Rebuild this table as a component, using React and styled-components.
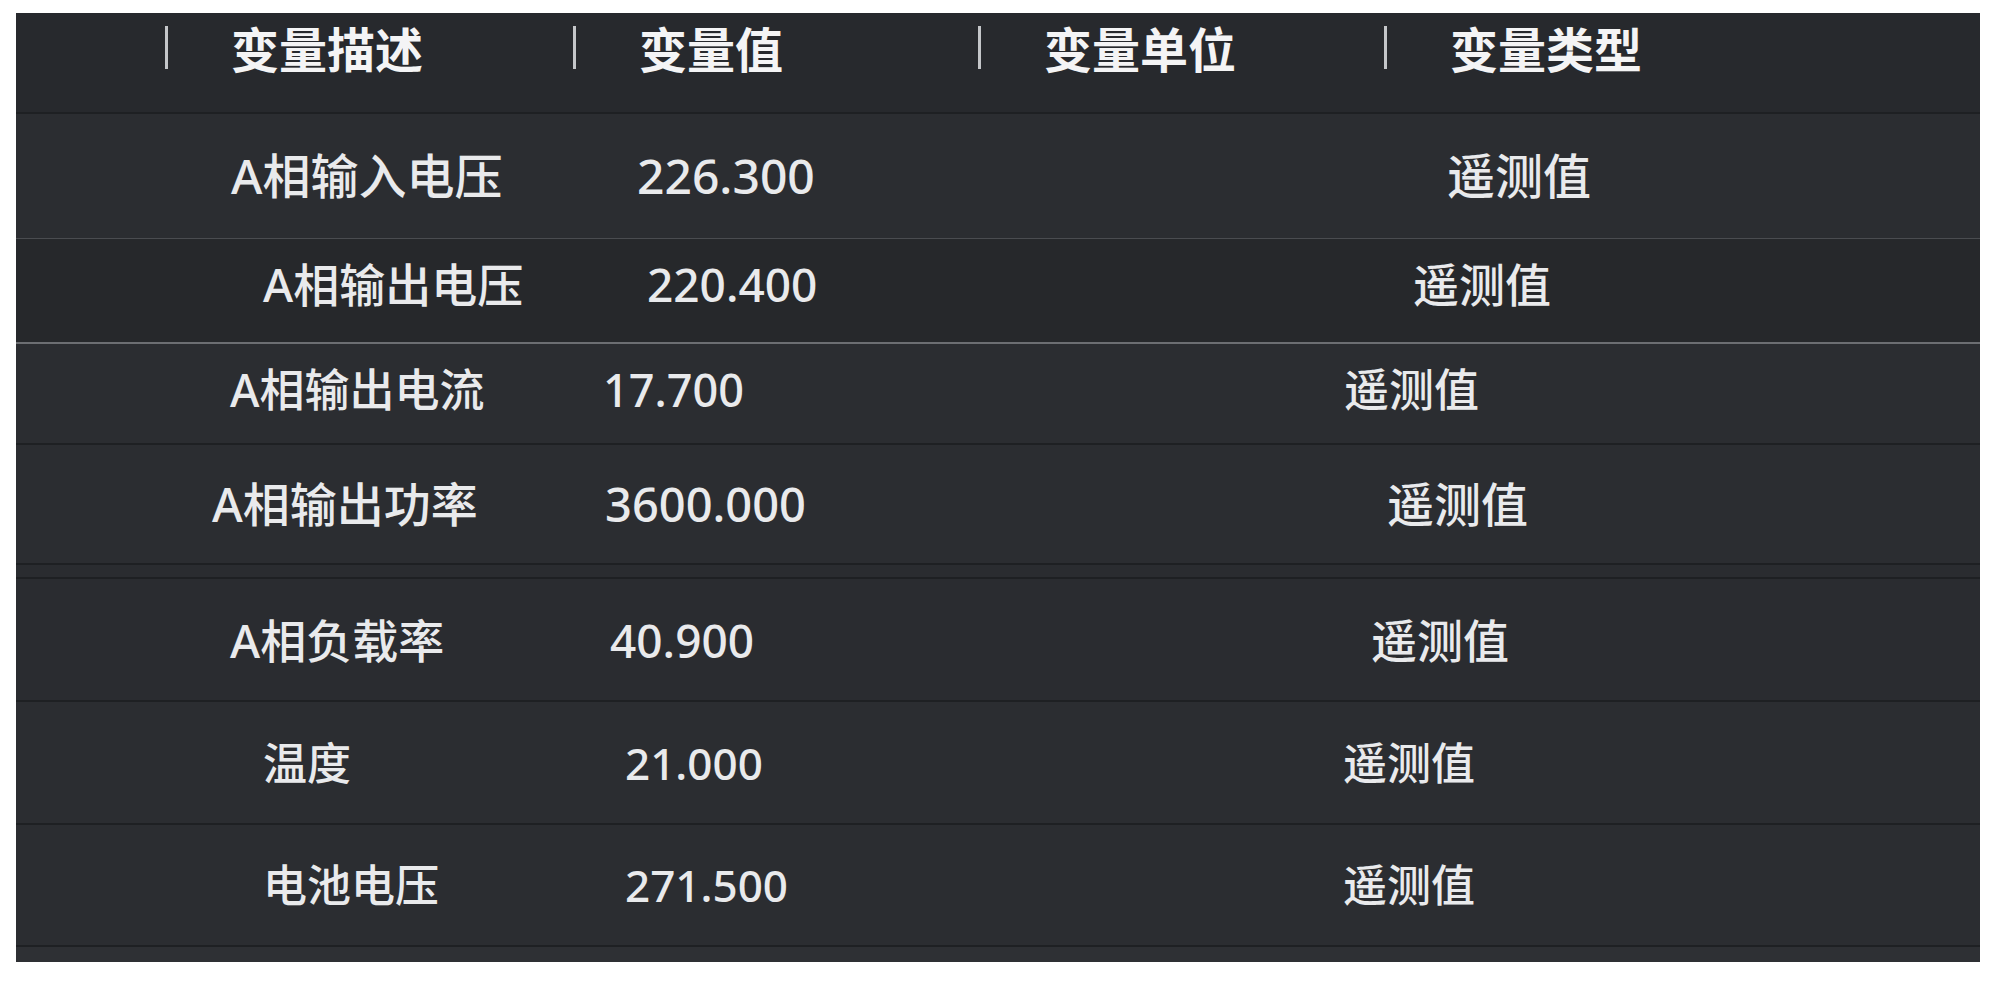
import styled, { createGlobalStyle } from "styled-components";

const GlobalStyle = createGlobalStyle`
  html, body {
    margin: 0;
    padding: 0;
    background: #ffffff;
  }
  body {
    font-family: "Noto Sans", "Noto Sans CJK SC", sans-serif;
  }
`;

const headers = ["变量描述", "变量值", "变量单位", "变量类型"];

// every row of the table has its own offsets (the panel is a stitched capture)
const rows = [
  { label: "A相输入电压", value: "226.300", type: "遥测值", h: 126, bg: "#2b2d31", line: "dark", size: 48, shift: [66, 64, 63] },
  { label: "A相输出电压", value: "220.400", type: "遥测值", h: 104, bg: "#26282b", line: "soft", size: 46, shift: [98, 74, 29], lift: 14 },
  { label: "A相输出电流", value: "17.700", type: "遥测值", h: 101, bg: "#2b2d31", line: "light", size: 45, shift: [65, 30, -40], lift: 8 },
  { label: "A相输出功率", value: "3600.000", type: "遥测值", h: 120, bg: "#2b2d31", line: "dark", size: 47, shift: [47, 32, 3] },
  { h: 14, bg: "#2a2c30", line: "dark" },
  { label: "A相负载率", value: "40.900", type: "遥测值", h: 123, bg: "#2a2c30", line: "dark", size: 46, shift: [65, 37, -13] },
  { label: "温度", value: "21.000", type: "遥测值", h: 123, bg: "#2b2d31", line: "dark", size: 44, shift: [98, 52, -41] },
  { label: "电池电压", value: "271.500", type: "遥测值", h: 122, bg: "#2b2d31", line: "dark", size: 44, shift: [98, 52, -41] },
  { h: 17, bg: "#2e3034", line: "dark" },
];

const lines = {
  dark: "2px solid #1e2023",
  soft: "1px solid #4a4c50",
  light: "2px solid #6c6e72",
};

export default function App() {
  return (
    <>
      <GlobalStyle />
      <Page>
        <Panel>
          <HeaderRow>
            {headers.map((title) => (
              <HeaderCell key={title}>
                <Bar />
                <HeaderText>{title}</HeaderText>
              </HeaderCell>
            ))}
          </HeaderRow>

          {rows.map((row, i) => (
            <Row
              key={i}
              $h={row.h}
              $bg={row.bg}
              $line={lines[row.line]}
              $lift={row.lift || 0}
            >
              {row.label && (
                <>
                  <Cell $col={1} $shift={row.shift[0]} $size={row.size}>
                    {row.label}
                  </Cell>
                  <Cell $col={2} $shift={row.shift[1]} $size={row.size}>
                    {row.value}
                  </Cell>
                  <Cell $col={4} $shift={row.shift[2]} $size={row.size}>
                    {row.type}
                  </Cell>
                </>
              )}
            </Row>
          ))}
        </Panel>
      </Page>
    </>
  );
}

const Page = styled.div`
  padding: 13px 20px 21px 16px;
`;

const Panel = styled.div`
  width: 1964px;
  display: flex;
  flex-direction: column;
  background: #2b2d31;
  color: #e9eaec;
`;

const HeaderRow = styled.div`
  display: grid;
  grid-template-columns: 408px 405px 406px 1fr;
  padding-left: 149px;
  padding-top: 10px;
  height: 99px;
  box-sizing: border-box;
  background: #27292d;
`;

const HeaderCell = styled.div`
  display: flex;
  align-items: center;
  gap: 63px;
  height: 48px;
`;

const Bar = styled.span`
  width: 3px;
  height: 43px;
  background: #c4c6c9;
`;

const HeaderText = styled.span`
  font-family: "Noto Sans CJK SC", sans-serif;
  font-size: 48px;
  font-weight: 700;
  line-height: 48px;
  color: #f4f4f5;
`;

const Row = styled.div`
  display: grid;
  grid-template-columns: 408px 405px 406px 1fr;
  align-items: center;
  padding-left: 149px;
  padding-bottom: ${(p) => p.$lift}px;
  height: ${(p) => p.$h}px;
  box-sizing: border-box;
  background: ${(p) => p.$bg};
  border-top: ${(p) => p.$line};
`;

const Cell = styled.div`
  grid-column: ${(p) => p.$col};
  margin-left: ${(p) => p.$shift}px;
  font-size: ${(p) => p.$size}px;
  line-height: 1;
  font-weight: 500;
  white-space: nowrap;
  color: #e9eaec;
`;
